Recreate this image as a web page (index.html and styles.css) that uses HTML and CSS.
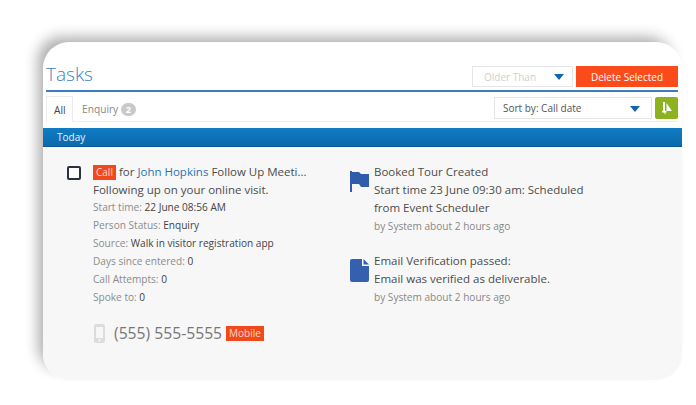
FILE: index.html
```html
<!DOCTYPE html>
<html lang="en">
<head>
<meta charset="utf-8">
<title>Tasks</title>
<link rel="stylesheet" href="styles.css">
</head>
<body>
<main class="card">
  <header class="head">
    <h1 class="title">Tasks</h1>
    <div class="head-actions">
      <div class="select older"><span>Older Than</span><i class="caret"></i></div>
      <button class="delete">Delete Selected</button>
    </div>
  </header>
  <nav class="tabs">
    <div class="tab active">All</div>
    <div class="tab">Enquiry <b class="count">2</b></div>
    <div class="sort">
      <div class="select sort-select"><span>Sort by: Call date</span><i class="caret"></i></div>
      <button class="sort-btn" aria-label="Sort order">
        <svg width="10" height="12" viewBox="0 0 10 12"><path d="M1 0h2v9h1.500v1.500H3.500V12h-1v-1.500H0V9h1z" fill="#fff"/><path d="M4.500 1L10 9H4.500z" fill="#fff"/></svg>
      </button>
    </div>
  </nav>
  <div class="band">Today</div>
  <section class="content">
    <div class="task">
      <span class="check"></span>
      <div class="task-body">
        <div class="line main"><span class="tag">Call</span> for <a class="link">John Hopkins</a> Follow Up Meeti...</div>
        <div class="line main">Following up on your online visit.</div>
        <div class="line meta"><span>Start time:</span> 22 June 08:56 AM</div>
        <div class="line meta"><span>Person Status:</span> Enquiry</div>
        <div class="line meta"><span>Source:</span> Walk in visitor registration app</div>
        <div class="line meta"><span>Days since entered:</span> 0</div>
        <div class="line meta"><span>Call Attempts:</span> 0</div>
        <div class="line meta"><span>Spoke to:</span> 0</div>
      </div>
      <div class="phone">
        <svg class="phone-icon" width="11" height="19" viewBox="0 0 11 19"><path fill-rule="evenodd" d="M2 0h7a2 2 0 0 1 2 2v15a2 2 0 0 1-2 2H2a2 2 0 0 1-2-2V2a2 2 0 0 1 2-2zm0 3v11h7V3zm3.500 12a1.200 1.200 0 1 0 0 2.400 1.200 1.200 0 0 0 0-2.400z" fill="#dcdcdc"/></svg>
        <span class="number">(555) 555-5555</span>
        <span class="tag mobile">Mobile</span>
      </div>
    </div>
    <div class="feed">
      <article class="event flag-event">
        <svg class="event-icon" width="19" height="21" viewBox="0 0 19 21"><path d="M0 0h2v21H0z M2 1h7l2 2h8v13h-8l-2-3H2z" fill="#2f5cab"/></svg>
        <div>
          <div class="line main">Booked Tour Created</div>
          <div class="line main">Start time 23 June 09:30 am: Scheduled</div>
          <div class="line main">from Event Scheduler</div>
          <div class="line by">by System about 2 hours ago</div>
        </div>
      </article>
      <article class="event">
        <svg class="event-icon" width="19" height="23" viewBox="0 0 19 23"><path d="M2 0h10v7h7v14a2 2 0 0 1-2 2H2a2 2 0 0 1-2-2V2a2 2 0 0 1 2-2zM13.500 0L19 5.500h-5.500z" fill="#3560b0"/></svg>
        <div>
          <div class="line main">Email Verification passed:</div>
          <div class="line main">Email was verified as deliverable.</div>
          <div class="line by">by System about 2 hours ago</div>
        </div>
      </article>
    </div>
  </section>
</main>
</body>
</html>
```
FILE: styles.css
```css
* { box-sizing: border-box; }
html, body { margin: 0; height: 100%; background: #fff; overflow: hidden; }
body { padding: 42px 14px 25px 43px; font-family: "Open Sans", sans-serif; color: #444; }
.card {
  width: 639px;
  height: 338px;
  background: #fff;
  border-radius: 26px;
  overflow: hidden;
  box-shadow: -8px -8px 14px -3px rgba(0, 0, 0, .32);
  display: flex;
  flex-direction: column;
}
.head {
  margin: 0 4px 0 3px;
  height: 50px;
  border-bottom: 2px solid #3b7dbd;
  display: flex;
  align-items: flex-end;
  justify-content: space-between;
  padding-bottom: 3px;
}
.title { margin: 0 0 -1px; font-size: 19px; font-weight: 300; line-height: 27px; color: #3f7fc4; }
.head-actions { display: flex; gap: 3px; }
.select {
  height: 21px;
  background: #fff;
  border: 1px solid #e6e6e6;
  display: flex;
  align-items: center;
  justify-content: space-between;
  font-size: 10px;
}
.older { width: 101px; padding: 0 8px 0 11px; color: #cfcfcf; }
.caret { width: 0; height: 0; border-left: 5px solid transparent; border-right: 5px solid transparent; border-top: 6px solid #1464b0; margin-top: 1px; }
.delete {
  width: 102px;
  height: 21px;
  border: 0;
  padding: 0;
  background: #fc4b1a;
  color: #fff;
  font: 500 10px "Open Sans", sans-serif;
}
.tabs {
  margin: 4px 4px 0 3px;
  height: 26px;
  border-bottom: 1px solid #ececec;
  display: flex;
  align-items: stretch;
  font-size: 10.2px;
}
.tab { padding: 6px 7px 0; color: #888; line-height: 15px; }
.tab.active { width: 27px; color: #444; background: #fff; border: 1px solid #ececec; border-bottom: 0; margin-bottom: -1px; padding: 6px 0 0 7px; }
.tab:nth-child(2) { padding-left: 9px; }
.count {
  display: inline-block;
  min-width: 15px;
  height: 13px;
  line-height: 13px;
  border-radius: 7px;
  background: #c9c9c9;
  color: #fff;
  font-size: 9px;
  text-align: center;
}
.sort { margin-left: auto; display: flex; gap: 3px; height: 22px; margin-top: 1px; }
.sort-select { width: 158px; height: 22px; padding: 0 11px 0 8px; color: #555; }
.sort-btn { width: 23px; height: 22px; border: 0; padding: 0; background: #8cb21f; border-radius: 2px; display: flex; align-items: center; justify-content: center; }
.band {
  margin-top: 6px;
  height: 19px;
  flex: none;
  padding-left: 14px;
  line-height: 18px;
  font-size: 10px;
  color: #eaf2fa;
  background: linear-gradient(#0f7cc4, #0b6aac);
  border-bottom: 1px solid #0a5796;
}
.content { flex: 1; background: #f7f7f7; display: flex; padding-top: 16px; }
.task { position: relative; width: 307px; flex: none; padding-left: 50px; }
.check { position: absolute; left: 24px; top: 3px; width: 14px; height: 14px; border: 2px solid #2a3140; border-radius: 2px; background: #fbfbfb; }
.line { white-space: nowrap; }
.main { font-size: 11.5px; line-height: 18px; color: #4c4c4c; }
.meta { font-size: 10.1px; line-height: 18px; color: #444; margin-top: 0; }
.main + .meta { margin-top: -1px; }
.meta span { color: #8c8c8c; }
.tag { display: inline-block; background: #f2491c; color: #f8d9cc; padding: 0 3px; font-size: 10px; line-height: 15px; }
.link { color: #2a72b5; }
.phone { display: flex; align-items: center; margin: 16px 0 0 1px; }
.phone-icon { margin-right: 9px; }
.number { font-size: 15.7px; line-height: 22px; color: #777; }
.mobile { margin-left: 4px; padding: 0 3px; }
.event { display: flex; gap: 5px; align-items: flex-start; margin-bottom: 17px; }
.event-icon { margin-top: 8px; flex: none; }
.event:nth-child(2) .event-icon { margin-top: 7px; }
.by { font-size: 10.1px; line-height: 18px; color: #888; }
```
